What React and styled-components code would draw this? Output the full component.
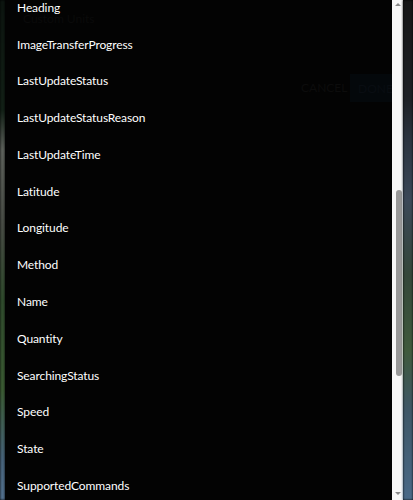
import styled, { createGlobalStyle } from 'styled-components';

const ITEMS = [
    'Heading',
    'ImageTransferProgress',
    'LastUpdateStatus',
    'LastUpdateStatusReason',
    'LastUpdateTime',
    'Latitude',
    'Longitude',
    'Method',
    'Name',
    'Quantity',
    'SearchingStatus',
    'Speed',
    'State',
    'SupportedCommands',
];

const GlobalStyle = createGlobalStyle`
    html, body {
        margin: 0;
        padding: 0;
        background: #000;
    }
    body {
        font-family: Lato, "Noto Sans", sans-serif;
    }
`;

const Screen = styled.div`
    width: 413px;
    height: 500px;
    display: flex;
    overflow: hidden;
`;

const EdgeStrip = styled.div`
    flex: 0 0 ${({$width}) => $width}px;
    height: 100%;
    background: ${({$bg}) => $bg};
    filter: blur(1px);
`;

const Panel = styled.div`
    position: relative;
    flex: 1;
    height: 100%;
    background: #030303;
    overflow: hidden;
`;

const Backdrop = styled.div`
    position: absolute;
    inset: 0;
    pointer-events: none;
`;

const GhostText = styled.div`
    position: absolute;
    left: ${({$x}) => $x}px;
    top: ${({$y}) => $y}px;
    color: ${({$color}) => $color || '#0a0a0a'};
    font-size: ${({$size}) => $size || 13}px;
    white-space: nowrap;
`;

const GhostButton = styled.div`
    position: absolute;
    left: 345px;
    top: 74px;
    width: 42px;
    height: 28px;
    background: #04080b;
    color: #090d12;
    font-size: 12px;
    display: flex;
    align-items: center;
    padding-left: 8px;
    overflow: hidden;
`;

const List = styled.ul`
    position: relative;
    list-style: none;
    margin: -11px 0 0;
    padding: 0;
`;

const Item = styled.li`
    height: 36.77px;
    display: flex;
    align-items: center;
    padding-left: 12px;
    color: #fff;
    font-size: 12px;
    letter-spacing: -0.1px;
    white-space: nowrap;
`;

const ScrollTrack = styled.div`
    flex: 0 0 11px;
    height: 100%;
    background: #f8f8f8;
    display: flex;
    flex-direction: column;
    align-items: center;
`;

const Arrow = styled.div`
    width: 0;
    height: 0;
    margin: ${({$down}) => $down ? 'auto 0 5px' : '3px 0 0'};
    border-left: 3px solid transparent;
    border-right: 3px solid transparent;
    ${({$down}) => $down ? 'border-top: 3px solid #8a8a8a;' : 'border-bottom: 3px solid #8a8a8a;'}
`;

const Thumb = styled.div`
    width: 6px;
    height: 186px;
    margin-top: 184px;
    margin-left: 2px;
    border-radius: 3px;
    background: #999;
`;

export default function App() {
    return (
        <>
            <GlobalStyle/>
            <Screen>
                <EdgeStrip
                    $width={5}
                    $bg="linear-gradient(180deg, #0c140f 0%, #122016 22%, #5c605a 30%, #474b44 45%, #2f4a2c 60%, #3a5a32 78%, #46627a 92%, #52708e 100%)"
                />
                <Panel>
                    <Backdrop>
                        <GhostText $x={18} $y={11} $color="#0a0a0a" $size={12}>Custom Units</GhostText>
                        <GhostText $x={296} $y={80} $color="#0c0c0c" $size={12}>CANCEL</GhostText>
                        <GhostButton>DONE</GhostButton>
                    </Backdrop>
                    <List>
                        {ITEMS.map((name) => (
                            <Item key={name}>{name}</Item>
                        ))}
                    </List>
                </Panel>
                <ScrollTrack>
                    <Arrow/>
                    <Thumb/>
                    <Arrow $down/>
                </ScrollTrack>
                <EdgeStrip
                    $width={10}
                    $bg="linear-gradient(180deg, #161616 0%, #1e2126 20%, #2b3440 28%, #3b4858 40%, #34473a 55%, #3f5a3c 70%, #3e5766 82%, #4a6a88 100%)"
                />
            </Screen>
        </>
    );
}
